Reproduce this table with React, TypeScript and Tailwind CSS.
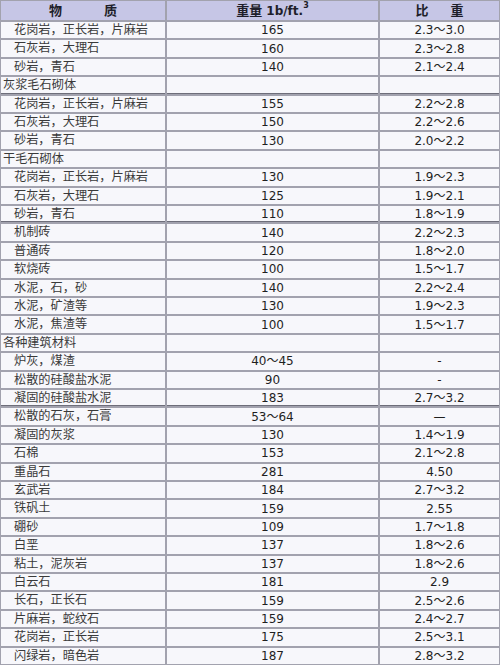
type Row = {
  name: string;
  weight?: string;
  gravity?: string;
  group?: boolean;
  heavy?: boolean;
};

const rows: Row[] = [
  { name: "花岗岩，正长岩，片麻岩", weight: "165", gravity: "2.3～3.0" },
  { name: "石灰岩，大理石", weight: "160", gravity: "2.3～2.8" },
  { name: "砂岩，青石", weight: "140", gravity: "2.1～2.4" },
  { name: "灰浆毛石砌体", group: true, heavy: true },
  { name: "花岗岩，正长岩，片麻岩", weight: "155", gravity: "2.2～2.8" },
  { name: "石灰岩，大理石", weight: "150", gravity: "2.2～2.6" },
  { name: "砂岩，青石", weight: "130", gravity: "2.0～2.2" },
  { name: "干毛石砌体", group: true },
  { name: "花岗岩，正长岩，片麻岩", weight: "130", gravity: "1.9～2.3" },
  { name: "石灰岩，大理石", weight: "125", gravity: "1.9～2.1" },
  { name: "砂岩，青石", weight: "110", gravity: "1.8～1.9", heavy: true },
  { name: "机制砖", weight: "140", gravity: "2.2～2.3" },
  { name: "普通砖", weight: "120", gravity: "1.8～2.0" },
  { name: "软烧砖", weight: "100", gravity: "1.5～1.7" },
  { name: "水泥，石，砂", weight: "140", gravity: "2.2～2.4" },
  { name: "水泥，矿渣等", weight: "130", gravity: "1.9～2.3" },
  { name: "水泥，焦渣等", weight: "100", gravity: "1.5～1.7" },
  { name: "各种建筑材料", group: true },
  { name: "炉灰，煤渣", weight: "40～45", gravity: "-" },
  { name: "松散的硅酸盐水泥", weight: "90", gravity: "-" },
  { name: "凝固的硅酸盐水泥", weight: "183", gravity: "2.7～3.2", heavy: true },
  { name: "松散的石灰，石膏", weight: "53～64", gravity: "—" },
  { name: "凝固的灰浆", weight: "130", gravity: "1.4～1.9" },
  { name: "石棉", weight: "153", gravity: "2.1～2.8" },
  { name: "重晶石", weight: "281", gravity: "4.50" },
  { name: "玄武岩", weight: "184", gravity: "2.7～3.2" },
  { name: "铁矾土", weight: "159", gravity: "2.55" },
  { name: "硼砂", weight: "109", gravity: "1.7～1.8" },
  { name: "白垩", weight: "137", gravity: "1.8～2.6" },
  { name: "粘土，泥灰岩", weight: "137", gravity: "1.8～2.6" },
  { name: "白云石", weight: "181", gravity: "2.9" },
  { name: "长石，正长石", weight: "159", gravity: "2.5～2.6" },
  { name: "片麻岩，蛇纹石", weight: "159", gravity: "2.4～2.7" },
  { name: "花岗岩，正长岩", weight: "175", gravity: "2.5～3.1" },
  { name: "闪绿岩，暗色岩", weight: "187", gravity: "2.8～3.2" },
];

const cjk = "font-['Liberation_Serif','Noto_Sans_CJK_SC',serif]";
const num = "font-['DejaVu_Sans','Noto_Sans_CJK_SC',sans-serif]";

export default function App() {
  return (
    <div className="w-[500px] h-[665px] bg-white">
      <div className="grid h-full grid-cols-[164px_211px_1fr] grid-rows-[19px_repeat(35,minmax(0,1fr))] gap-[2px] bg-[#a2a2ae] p-[1px]">
        {/* Header */}
        <div className={`flex items-center justify-center bg-[#c6c6e6] text-[13px] font-bold text-[#1e1e2a] ${cjk}`}>
          <span>物</span>
          <span className="ml-[42px]">质</span>
        </div>
        <div className={`flex items-center justify-center bg-[#c6c6e6] text-[12px] font-bold text-[#1e1e2a] ${num}`}>
          <span className={`${cjk} text-[13px]`}>重量</span>
          <span className="ml-[4px]">1b/ft.</span>
          <sup className="relative -top-[5px] text-[8px] font-bold">3</sup>
        </div>
        <div className={`flex items-center justify-center bg-[#c6c6e6] text-[13px] font-bold text-[#1e1e2a] ${cjk}`}>
          <span>比</span>
          <span className="ml-[22px]">重</span>
        </div>

        {rows.map((r, i) => {
          const edge = r.heavy ? "border-b border-[#6e6e7a]" : "";
          return [
            <div
              key={`n${i}`}
              className={`flex items-center bg-[#f7f7fb] text-[12.2px] leading-none text-[#3a3a3a] ${cjk} ${r.group ? "pl-[2px]" : "pl-[13px]"} ${edge}`}
            >
              {r.name}
            </div>,
            <div
              key={`w${i}`}
              className={`flex items-center justify-center bg-[#f7f7fb] text-[12px] leading-none text-[#1f1f1f] ${num} ${edge}`}
            >
              {r.weight}
            </div>,
            <div
              key={`g${i}`}
              className={`flex items-center justify-center bg-[#f7f7fb] text-[12px] leading-none text-[#1f1f1f] ${num} ${edge}`}
            >
              {r.gravity}
            </div>,
          ];
        })}
      </div>
    </div>
  );
}
